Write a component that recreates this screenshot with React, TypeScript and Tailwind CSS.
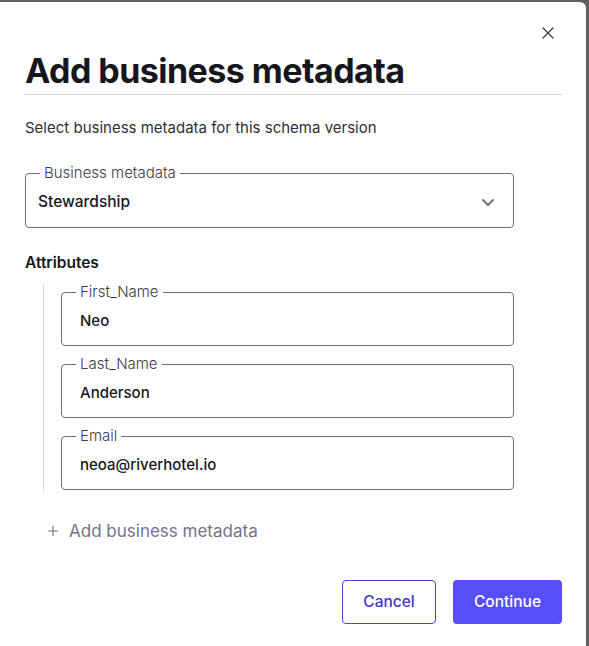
import React from "react";

function Field({ label, value, className = "" }: { label: string; value: string; className?: string }) {
  return (
    <fieldset className={`border border-[#6f6e84] rounded-[4px] px-[18px] h-[62px] ${className}`}>
      <legend className="ml-[-4px] px-[4px] text-[15px] leading-[16px] font-light text-[#3b3b44]">{label}</legend>
      <div className="pt-[11px] text-[15px] leading-[20px] font-medium text-[#16161d]">{value}</div>
    </fieldset>
  );
}

export default function App() {
  return (
    <div className="w-[589px] h-[646px] bg-[#606060] pt-[2px] pr-[3px]" style={{ fontFamily: "Inter, 'Noto Sans', sans-serif" }}>
      <div className="relative bg-white h-full rounded-tr-[6px] px-[25px]">
        <button className="absolute right-[28px] top-[21px] w-[20px] h-[20px] flex items-center justify-center text-[#3b3b48]">
          <svg width="12" height="12" viewBox="0 0 12 12" fill="none" stroke="currentColor" strokeWidth="1.3" strokeLinecap="round">
            <path d="M1 1L11 11M11 1L1 11" />
          </svg>
        </button>
        <h1 className="pt-[49px] text-[34px] leading-[40px] font-bold tracking-[-0.55px] text-[#16161d]">Add business metadata</h1>
        <div className="mt-[3px] h-px bg-[#d4d4dc] w-[537px]" />
        <p className="mt-[23px] text-[15px] leading-[20px] text-[#2f2f36]">Select business metadata for this schema version</p>
        <fieldset className="mt-[27px] w-[489px] h-[63px] border border-[#6f6e84] rounded-[4px] px-3 relative">
          <legend className="ml-[2px] px-[4px] text-[15px] leading-[16px] font-light text-[#3b3b44]">Business metadata</legend>
          <div className="flex items-center justify-between pt-[11px] pr-[6px]">
            <span className="text-[15.5px] leading-[20px] font-medium text-[#16161d]">Stewardship</span>
            <svg width="14" height="9" viewBox="0 0 14 9" fill="none" stroke="#6f6e84" strokeWidth="2" strokeLinecap="round" strokeLinejoin="round">
              <path d="M2 2L7 7L12 2" />
            </svg>
          </div>
        </fieldset>
        <div className="mt-[25px] text-[15.5px] leading-[20px] font-semibold text-[#16161d]">Attributes</div>
        <div className="mt-[11px] ml-[18px] border-l border-[#d4d4dc] pl-[17px] w-[471px] flex flex-col gap-[10px] pb-[1px]">
          <Field label="First_Name" value="Neo" />
          <Field label="Last_Name" value="Anderson" />
          <Field label="Email" value="neoa@riverhotel.io" />
        </div>
        <div className="mt-[28px] ml-[22px] flex items-center gap-[10px] text-[#74738a]">
          <svg width="12" height="12" viewBox="0 0 12 12" fill="none" stroke="currentColor" strokeWidth="1.2">
            <path d="M6 1V11M1 6H11" />
          </svg>
          <span className="text-[17px] leading-[24px]">Add business metadata</span>
        </div>
        <div className="mt-[37px] flex justify-end gap-[17px] pr-[0px] w-[537px]">
          <button className="w-[94px] h-[44px] rounded-[4px] border border-[#4a43d8] text-[#3f37c9] text-[15.5px] font-medium">Cancel</button>
          <button className="w-[109px] h-[44px] rounded-[4px] bg-[#574ff5] text-white text-[15.5px] font-medium">Continue</button>
        </div>
      </div>
    </div>
  );
}
